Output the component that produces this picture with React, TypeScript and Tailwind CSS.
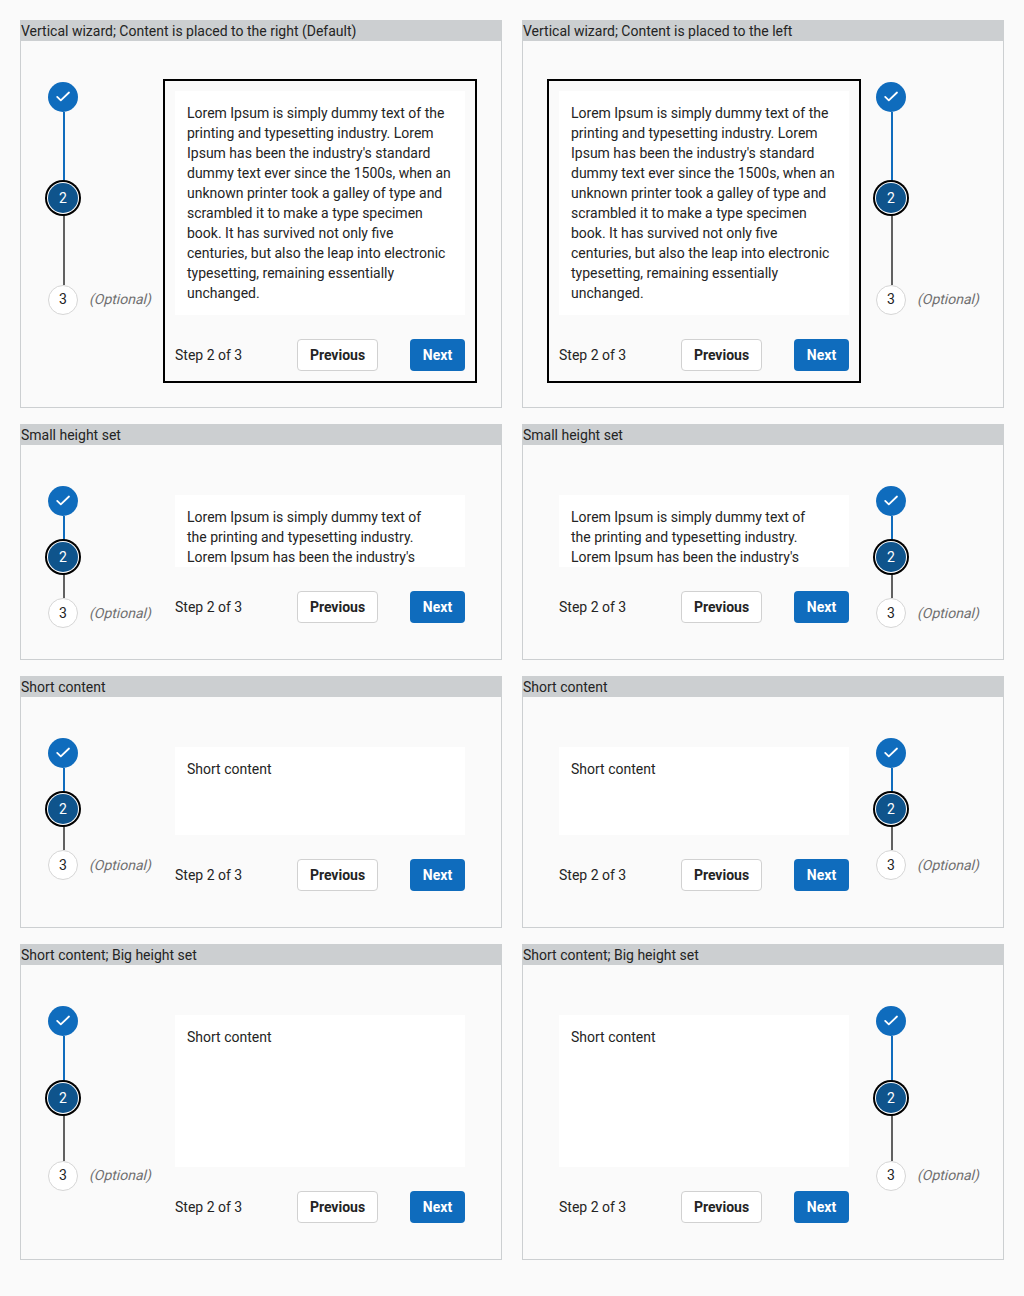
import { clsx } from 'clsx';

type WizardProps = {
  title: string;
  height: string;
  contentHeight: string;
  firstGap: string;
  secondGap: string;
  text: string;
  focused?: boolean;
  scrolls?: boolean;
  raisedLabel?: boolean;
};

const LOREM =
  "Lorem Ipsum is simply dummy text of the printing and typesetting industry. Lorem Ipsum has been the industry's standard dummy text ever since the 1500s, when an unknown printer took a galley of type and scrambled it to make a type specimen book. It has survived not only five centuries, but also the leap into electronic typesetting, remaining essentially unchanged.";

const LOREM_EXCERPT =
  "Lorem Ipsum is simply dummy text of the printing and typesetting industry. Lorem Ipsum has been the industry's";

const wizards: WizardProps[] = [
  {
    title: 'Vertical wizard; Content is placed to the right (Default)',
    height: 'h-[388px]',
    contentHeight: 'h-[224px]',
    firstGap: 'h-[71px]',
    secondGap: 'h-[72px]',
    text: LOREM,
    focused: true,
    raisedLabel: true,
  },
  {
    title: 'Small height set',
    height: 'h-[236px]',
    contentHeight: 'h-[72px]',
    firstGap: 'h-[26px]',
    secondGap: 'h-[26px]',
    text: LOREM_EXCERPT,
    scrolls: true,
  },
  {
    title: 'Short content',
    height: 'h-[252px]',
    contentHeight: 'h-[88px]',
    firstGap: 'h-[26px]',
    secondGap: 'h-[26px]',
    text: 'Short content',
  },
  {
    title: 'Short content; Big height set',
    height: 'h-[316px]',
    contentHeight: 'h-[152px]',
    firstGap: 'h-[47px]',
    secondGap: 'h-[48px]',
    text: 'Short content',
    raisedLabel: true,
  },
];

function Steps({
  firstGap,
  secondGap,
  raisedLabel,
}: Pick<WizardProps, 'firstGap' | 'secondGap' | 'raisedLabel'>) {
  return (
    <div className="flex w-[104px] shrink-0 flex-col items-start pt-[3px]">
      <div className="flex size-[30px] items-center justify-center rounded-full bg-[#0f6cbd]">
        <svg width="16" height="16" viewBox="0 0 16 16" fill="none" aria-hidden="true">
          <path
            d="M2.2 7.9 5.8 11.3 14 3.5"
            stroke="#fff"
            strokeWidth="1.8"
            strokeLinecap="round"
            strokeLinejoin="round"
          />
        </svg>
      </div>
      <div className={clsx('ml-[15px] w-0.5 bg-[#0f6cbd]', firstGap)} />
      <div className="relative z-10 flex size-[30px] items-center justify-center rounded-full bg-[#0f548c] text-white shadow-[0_0_0_1px_#fff,0_0_0_3px_#000]">
        2
      </div>
      <div className={clsx('ml-[15px] w-0.5 bg-[#616161]', secondGap)} />
      <div className="flex items-center">
        <div
          className={clsx(
            'flex size-[30px] items-center justify-center rounded-full border border-[#d6d6d6] bg-white',
            raisedLabel && 'pb-0.5',
          )}
        >
          3
        </div>
        <span
          className={clsx(
            'ml-[11px] block origin-[0_15px] -skew-x-[14deg] text-[#707070]',
            raisedLabel && 'mb-0.5',
          )}
        >
          (Optional)
        </span>
      </div>
    </div>
  );
}

function Wizard({ reversed, ...props }: WizardProps & { reversed?: boolean }) {
  return (
    <section className={clsx('flex flex-col border border-[#cccfd1]', props.height)}>
      <h2 className="h-5 shrink-0 bg-[#cccfd1]">{props.title}</h2>
      <div
        className={clsx(
          'flex pt-[38px]',
          reversed ? 'flex-row-reverse justify-end gap-[15px] pl-6' : 'gap-[11px] pl-[27px]',
        )}
      >
        <Steps
          firstGap={props.firstGap}
          secondGap={props.secondGap}
          raisedLabel={props.raisedLabel}
        />
        <div
          className={clsx(
            'w-[314px] shrink-0 border-2 p-[10px]',
            props.focused ? 'border-black' : 'border-transparent',
          )}
        >
          <div className={clsx('overflow-hidden bg-white pt-3 pl-3', props.contentHeight)}>
            <p className={props.scrolls ? 'w-[251px]' : 'w-[266px]'}>{props.text}</p>
          </div>
          <div className="mt-6 flex h-8 items-center">
            <span>Step 2 of 3</span>
            <button className="ml-auto h-8 w-[81px] rounded-[4px] border border-[#d1d1d1] bg-white font-bold">
              Previous
            </button>
            <button className="ml-8 h-8 w-[55px] rounded-[4px] bg-[#0f6cbd] font-bold text-white">
              Next
            </button>
          </div>
        </div>
      </div>
    </section>
  );
}

export default function App() {
  return (
    <main className="grid min-h-screen w-[1024px] grid-cols-2 content-start gap-x-5 gap-y-4 bg-[#fafafa] p-5 font-['Roboto',sans-serif] text-[14px] leading-5 text-[#242424]">
      {wizards.map((w) => [
        <Wizard key={`${w.title}-right`} {...w} />,
        <Wizard
          key={`${w.title}-left`}
          {...w}
          title={w.focused ? 'Vertical wizard; Content is placed to the left' : w.title}
          reversed
        />,
      ])}
    </main>
  );
}
